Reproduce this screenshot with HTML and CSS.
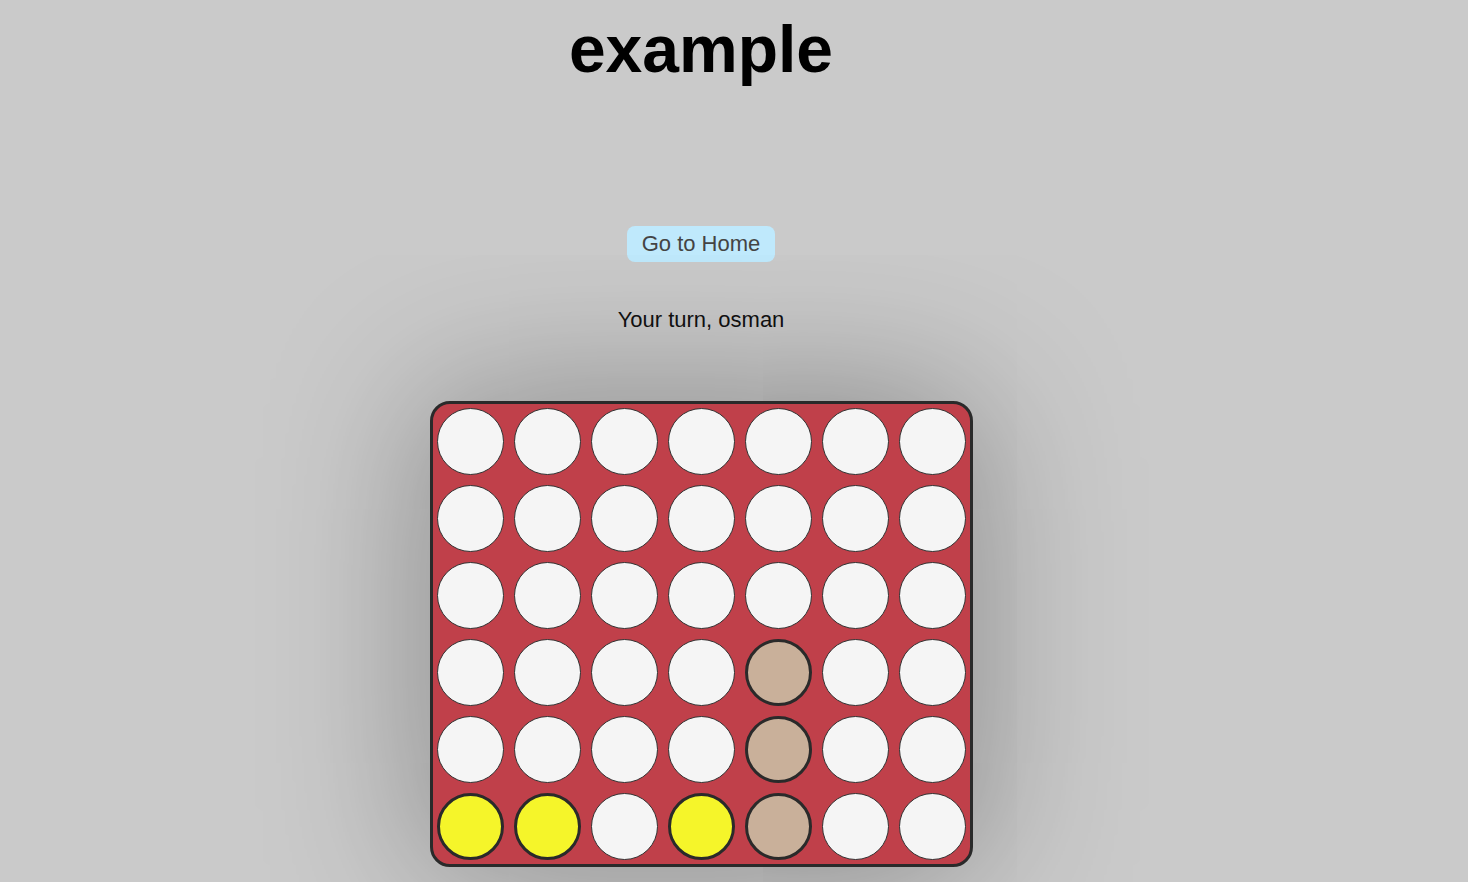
FILE: index.html
```html
<!DOCTYPE html>
<html>
<head>
<meta charset="utf-8">
<link rel="stylesheet" href="styles.css">
</head>
<body>
<div class="page">
  <h1 class="title">example</h1>
  <button class="home-btn">Go to Home</button>
  <p class="status">Your turn, osman</p>
  <div class="board">
    <div class="cell"></div><div class="cell"></div><div class="cell"></div><div class="cell"></div><div class="cell"></div><div class="cell"></div><div class="cell"></div>
    <div class="cell"></div><div class="cell"></div><div class="cell"></div><div class="cell"></div><div class="cell"></div><div class="cell"></div><div class="cell"></div>
    <div class="cell"></div><div class="cell"></div><div class="cell"></div><div class="cell"></div><div class="cell"></div><div class="cell"></div><div class="cell"></div>
    <div class="cell"></div><div class="cell"></div><div class="cell"></div><div class="cell"></div><div class="cell tan"></div><div class="cell"></div><div class="cell"></div>
    <div class="cell"></div><div class="cell"></div><div class="cell"></div><div class="cell"></div><div class="cell tan"></div><div class="cell"></div><div class="cell"></div>
    <div class="cell yellow"></div><div class="cell yellow"></div><div class="cell"></div><div class="cell yellow"></div><div class="cell tan"></div><div class="cell"></div><div class="cell"></div>
  </div>
</div>
</body>
</html>
```
FILE: styles.css
```css
html, body {
  margin: 0;
  padding: 0;
  background: #cacaca;
  height: 100%;
  overflow: hidden;
}
body {
  font-family: "Liberation Sans", Arial, sans-serif;
}
.page {
  width: 1402px;
  display: flex;
  flex-direction: column;
  align-items: center;
}
.title {
  margin: 11px 0 0 0;
  font-size: 66px;
  font-weight: bold;
  color: #000;
  line-height: 76px;
}
.home-btn {
  margin-top: 139px;
  width: 148px;
  height: 36px;
  border: none;
  border-radius: 8px;
  background: #bfe9fc;
  color: #444;
  font-family: "Liberation Sans", Arial, sans-serif;
  font-size: 22px;
  padding: 0;
}
.status {
  margin: 45px 0 0 0;
  font-size: 22px;
  line-height: 25px;
  color: #111;
}
.board {
  margin-top: 69px;
  box-sizing: border-box;
  width: 543px;
  height: 466px;
  padding: 3px 3px 3px 3px;
  background: #c0404a;
  border: 3px solid #2a2a2a;
  border-radius: 20px;
  display: grid;
  grid-template-columns: repeat(7, 67px);
  grid-template-rows: repeat(6, 67px);
  gap: 10px;
  justify-content: center;
  align-content: center;
  box-shadow: 0 0 160px rgba(0, 0, 0, 0.35);
}
.cell {
  box-sizing: border-box;
  width: 67px;
  height: 67px;
  border-radius: 50%;
  background: #f5f5f5;
  border: 1.5px solid #333;
}
.cell.tan {
  background: #c9b09a;
  border: 3px solid #2a2a2a;
}
.cell.yellow {
  background: #f5f52a;
  border: 3px solid #2a2a2a;
}
```
